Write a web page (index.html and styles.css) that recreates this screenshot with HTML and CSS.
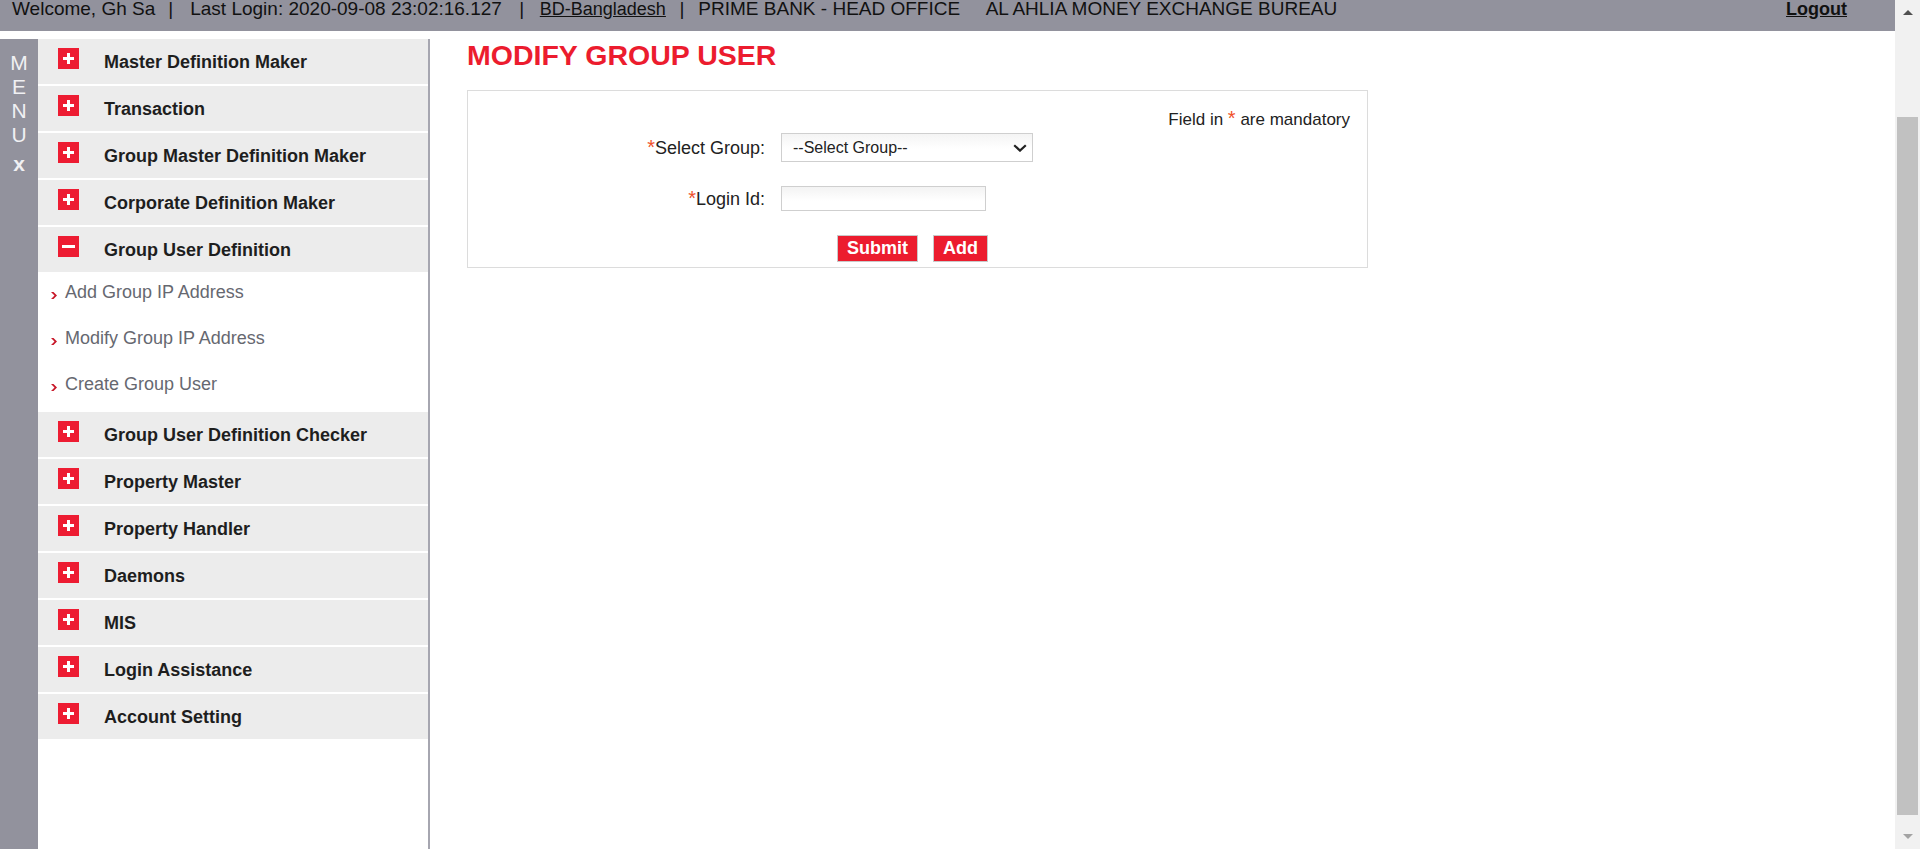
FILE: index.html
```html
<!DOCTYPE html>
<html lang="en">
<head>
<meta charset="utf-8">
<title>Modify Group User</title>
<link rel="stylesheet" href="styles.css">
</head>
<body>
<div class="app">
  <div class="page">
    <header class="topbar">
      <span class="t-welcome">Welcome, Gh Sa</span>
      <span class="sep sep1">|</span>
      <span class="t-last">Last Login: 2020-09-08 23:02:16.127</span>
      <span class="sep sep2">|</span>
      <a class="t-region" href="#">BD-Bangladesh</a>
      <span class="sep sep3">|</span>
      <span class="t-branch">PRIME BANK - HEAD OFFICE</span>
      <span class="t-bureau">AL AHLIA MONEY EXCHANGE BUREAU</span>
      <a class="t-logout" href="#">Logout</a>
    </header>

    <div class="workspace">
      <div class="menu-strip">
        <span class="ml">M</span>
        <span class="ml">E</span>
        <span class="ml">N</span>
        <span class="ml">U</span>
        <span class="ml ml-x">x</span>
      </div>

      <nav class="sidebar">
        <div class="nav-item"><svg class="nav-icon" viewBox="0 0 21 21" width="21" height="21"><rect width="21" height="21" fill="#ed1c32"/><rect x="5" y="9" width="11" height="3" fill="#fff"/><rect x="9" y="5" width="3" height="11" fill="#fff"/></svg><span class="nav-text">Master Definition Maker</span></div>
        <div class="nav-item"><svg class="nav-icon" viewBox="0 0 21 21" width="21" height="21"><rect width="21" height="21" fill="#ed1c32"/><rect x="5" y="9" width="11" height="3" fill="#fff"/><rect x="9" y="5" width="3" height="11" fill="#fff"/></svg><span class="nav-text">Transaction</span></div>
        <div class="nav-item"><svg class="nav-icon" viewBox="0 0 21 21" width="21" height="21"><rect width="21" height="21" fill="#ed1c32"/><rect x="5" y="9" width="11" height="3" fill="#fff"/><rect x="9" y="5" width="3" height="11" fill="#fff"/></svg><span class="nav-text">Group Master Definition Maker</span></div>
        <div class="nav-item"><svg class="nav-icon" viewBox="0 0 21 21" width="21" height="21"><rect width="21" height="21" fill="#ed1c32"/><rect x="5" y="9" width="11" height="3" fill="#fff"/><rect x="9" y="5" width="3" height="11" fill="#fff"/></svg><span class="nav-text">Corporate Definition Maker</span></div>
        <div class="nav-item"><svg class="nav-icon" viewBox="0 0 21 21" width="21" height="21"><rect width="21" height="21" fill="#ed1c32"/><rect x="4" y="9" width="13" height="3" fill="#fff"/></svg><span class="nav-text">Group User Definition</span></div>
        <ul class="sub-list">
          <li class="sub-item"><svg class="bullet" viewBox="0 0 6 7" width="6" height="7"><polygon points="0,0 2.5,0 6,3.5 2.5,7 0,7 3.5,3.5" fill="#c8182a"/></svg><a href="#" class="sub-link">Add Group IP Address</a></li>
          <li class="sub-item"><svg class="bullet" viewBox="0 0 6 7" width="6" height="7"><polygon points="0,0 2.5,0 6,3.5 2.5,7 0,7 3.5,3.5" fill="#c8182a"/></svg><a href="#" class="sub-link">Modify Group IP Address</a></li>
          <li class="sub-item"><svg class="bullet" viewBox="0 0 6 7" width="6" height="7"><polygon points="0,0 2.5,0 6,3.5 2.5,7 0,7 3.5,3.5" fill="#c8182a"/></svg><a href="#" class="sub-link">Create Group User</a></li>
        </ul>
        <div class="nav-item"><svg class="nav-icon" viewBox="0 0 21 21" width="21" height="21"><rect width="21" height="21" fill="#ed1c32"/><rect x="5" y="9" width="11" height="3" fill="#fff"/><rect x="9" y="5" width="3" height="11" fill="#fff"/></svg><span class="nav-text">Group User Definition Checker</span></div>
        <div class="nav-item"><svg class="nav-icon" viewBox="0 0 21 21" width="21" height="21"><rect width="21" height="21" fill="#ed1c32"/><rect x="5" y="9" width="11" height="3" fill="#fff"/><rect x="9" y="5" width="3" height="11" fill="#fff"/></svg><span class="nav-text">Property Master</span></div>
        <div class="nav-item"><svg class="nav-icon" viewBox="0 0 21 21" width="21" height="21"><rect width="21" height="21" fill="#ed1c32"/><rect x="5" y="9" width="11" height="3" fill="#fff"/><rect x="9" y="5" width="3" height="11" fill="#fff"/></svg><span class="nav-text">Property Handler</span></div>
        <div class="nav-item"><svg class="nav-icon" viewBox="0 0 21 21" width="21" height="21"><rect width="21" height="21" fill="#ed1c32"/><rect x="5" y="9" width="11" height="3" fill="#fff"/><rect x="9" y="5" width="3" height="11" fill="#fff"/></svg><span class="nav-text">Daemons</span></div>
        <div class="nav-item"><svg class="nav-icon" viewBox="0 0 21 21" width="21" height="21"><rect width="21" height="21" fill="#ed1c32"/><rect x="5" y="9" width="11" height="3" fill="#fff"/><rect x="9" y="5" width="3" height="11" fill="#fff"/></svg><span class="nav-text">MIS</span></div>
        <div class="nav-item"><svg class="nav-icon" viewBox="0 0 21 21" width="21" height="21"><rect width="21" height="21" fill="#ed1c32"/><rect x="5" y="9" width="11" height="3" fill="#fff"/><rect x="9" y="5" width="3" height="11" fill="#fff"/></svg><span class="nav-text">Login Assistance</span></div>
        <div class="nav-item"><svg class="nav-icon" viewBox="0 0 21 21" width="21" height="21"><rect width="21" height="21" fill="#ed1c32"/><rect x="5" y="9" width="11" height="3" fill="#fff"/><rect x="9" y="5" width="3" height="11" fill="#fff"/></svg><span class="nav-text">Account Setting</span></div>
      </nav>

      <main class="content">
        <h1 class="page-title">MODIFY GROUP USER</h1>
        <section class="form-box">
          <p class="mandatory">Field in <span class="req req-note">*</span> are mandatory</p>
          <div class="form-grid">
            <label class="form-label" for="grp"><span class="req">*</span>Select Group:</label>
            <div class="select-wrap">
              <select id="grp" class="select"><option>--Select Group--</option></select>
              <svg class="chev" viewBox="0 0 14 8" width="14" height="8"><path d="M1.2 1.2 L7 6.6 L12.8 1.2" fill="none" stroke="#222" stroke-width="2.2"/></svg>
            </div>
            <label class="form-label" for="login"><span class="req">*</span>Login Id:</label>
            <input id="login" class="text-input" type="text">
          </div>
          <div class="actions">
            <button class="btn" type="button">Submit</button>
            <button class="btn" type="button">Add</button>
          </div>
        </section>
      </main>
    </div>
  </div>

  <div class="scrollbar">
    <div class="sb-btn"><svg viewBox="0 0 10 5" width="10" height="5"><polygon points="0,5 5,0 10,5" fill="#505050"/></svg></div>
    <div class="sb-track"><div class="sb-thumb"></div></div>
    <div class="sb-btn"><svg viewBox="0 0 10 5" width="10" height="5"><polygon points="0,0 10,0 5,5" fill="#a3a3a3"/></svg></div>
  </div>
</div>
</body>
</html>
```

FILE: styles.css
```css
* { box-sizing: border-box; }

html, body {
  margin: 0;
  padding: 0;
  height: 100%;
  overflow: hidden;
}

body {
  font-family: "Liberation Sans", Arial, sans-serif;
  color: #222;
  background: #fff;
}

.app {
  display: flex;
  height: 849px;
}

.page {
  flex: 1;
  min-width: 0;
  display: flex;
  flex-direction: column;
}

/* ---------- top bar ---------- */
.topbar {
  flex: none;
  height: 31px;
  background: #92929d;
  display: flex;
  align-items: flex-start;
  padding: 0 48px 0 12px;
  font-size: 19px;
  line-height: 18px;
  color: #111;
  white-space: nowrap;
}

.topbar a { color: #111; }

.sep1 { margin-left: 13px; }
.t-last { margin-left: 17px; }
.sep2 { margin-left: 17.5px; }
.t-region { margin-left: 15.5px; font-size: 18px; text-decoration: underline; }
.sep3 { margin-left: 13.5px; }
.t-branch { margin-left: 14px; }
.t-bureau { margin-left: 25.5px; }

.t-logout {
  margin-left: auto;
  font-size: 18px;
  font-weight: bold;
  text-decoration: underline;
}

/* ---------- workspace ---------- */
.workspace {
  flex: 1;
  display: flex;
  margin-top: 8px;
  min-height: 0;
}

.menu-strip {
  flex: none;
  width: 38px;
  background: #92929d;
  display: flex;
  flex-direction: column;
  align-items: center;
  padding-top: 12px;
  color: #f0f0f3;
  font-size: 21px;
}

.ml {
  display: block;
  flex: none;
  height: 24px;
  line-height: 24px;
}

.ml-x {
  font-weight: bold;
  margin-top: 5px;
}

/* ---------- sidebar ---------- */
.sidebar {
  flex: none;
  width: 392px;
  border-right: 2px solid #a6a6b0;
  background: #fff;
}

.nav-item {
  display: flex;
  align-items: flex-start;
  height: 45px;
  margin-bottom: 2px;
  background: #ececec;
}

.nav-icon {
  flex: none;
  margin: 9px 0 0 20px;
  display: block;
}

.nav-text {
  margin-left: 25px;
  font-size: 18px;
  font-weight: bold;
  line-height: 46px;
  color: #1e1e1e;
}

.sub-list {
  list-style: none;
  margin: 0;
  padding: 0;
}

.sub-item {
  height: 46px;
  padding-left: 13px;
  font-size: 18px;
  line-height: 36px;
}

.bullet {
  vertical-align: -1px;
  margin-right: 8px;
}

.sub-link {
  color: #666870;
  text-decoration: none;
}

/* ---------- content ---------- */
.content {
  flex: 1;
  min-width: 0;
  padding-left: 37px;
}

.page-title {
  margin: 0;
  font-size: 28.5px;
  line-height: 32px;
  font-weight: bold;
  color: #ec1c2e;
}

.form-box {
  margin-top: 19px;
  width: 901px;
  border: 1px solid #dcdcdc;
  padding: 19px 17px 5px 0;
}

.mandatory {
  margin: 0 0 3px;
  text-align: right;
  font-size: 17px;
  line-height: 20px;
  color: #222;
}

.req {
  color: #f0502a;
  font-size: 20px;
  line-height: 0;
}

.form-grid {
  display: grid;
  grid-template-columns: 297px auto;
  column-gap: 16px;
  row-gap: 24px;
  align-items: center;
  justify-items: start;
}

.form-label {
  justify-self: end;
  font-size: 18px;
  line-height: 22px;
  color: #222;
}

.select-wrap {
  position: relative;
  width: 252px;
  height: 29px;
}

.select {
  appearance: none;
  -webkit-appearance: none;
  display: block;
  width: 252px;
  height: 29px;
  margin: 0;
  padding: 0 0 0 11px;
  border: 1px solid #cfcfcf;
  border-radius: 0;
  background: linear-gradient(#f4f4f4, #ffffff 55%);
  font-family: "Liberation Sans", Arial, sans-serif;
  font-size: 16px;
  color: #222;
}

.chev {
  position: absolute;
  left: 232px;
  top: 11px;
  pointer-events: none;
}

.text-input {
  display: block;
  width: 205px;
  height: 25px;
  margin: 0;
  padding: 0 6px;
  border: 1px solid #cfcfcf;
  border-radius: 0;
  background: linear-gradient(#f3f3f3, #ffffff 60%);
  font-family: "Liberation Sans", Arial, sans-serif;
  font-size: 16px;
}

.actions {
  display: flex;
  justify-content: center;
  gap: 15px;
  margin-top: 24px;
  padding-right: 10px;
  padding-left: 17px;
}

.btn {
  height: 27px;
  margin: 0;
  padding: 0 9px;
  border: 1px solid #c9c9c9;
  border-radius: 0;
  background: #ec1c2e;
  color: #fff;
  font-family: "Liberation Sans", Arial, sans-serif;
  font-size: 18px;
  font-weight: bold;
  line-height: 25px;
}

/* ---------- scrollbar ---------- */
.scrollbar {
  flex: none;
  width: 25px;
  background: #f1f1f1;
  display: flex;
  flex-direction: column;
}

.sb-btn {
  flex: none;
  height: 25px;
  display: flex;
  align-items: center;
  justify-content: center;
}

.sb-track {
  flex: 1;
  padding: 92px 2px 0 2px;
}

.sb-thumb {
  height: 698px;
  background: #c1c1c1;
}
```
